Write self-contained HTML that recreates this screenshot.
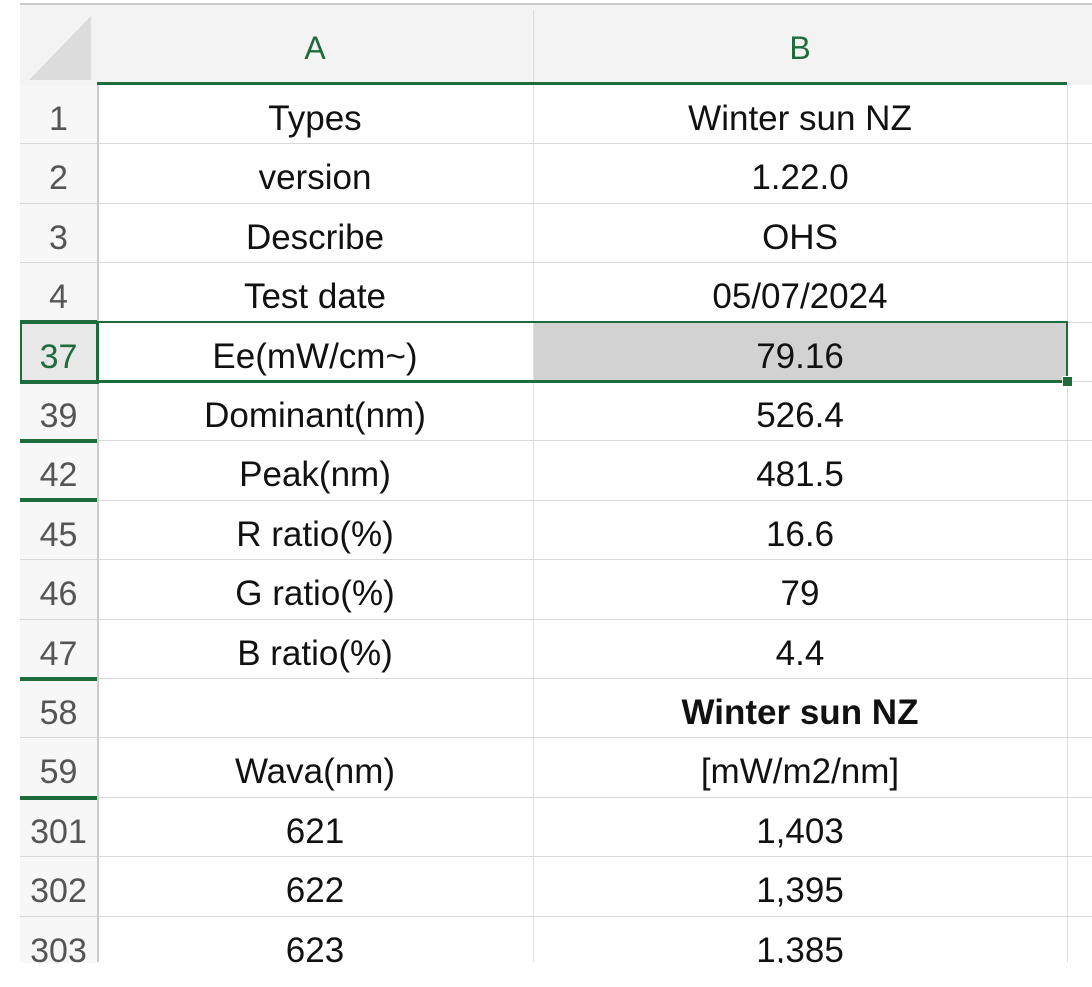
<!DOCTYPE html>
<html><head><style>
body{margin:0;width:1092px;height:987px;background:#fff;position:relative;overflow:hidden;font-family:"Liberation Sans",sans-serif}
.a{position:absolute}
.hd{background:#f3f3f3}
.row{position:absolute;left:20px;width:1072px;height:59.4px;border-bottom:1.5px solid #d9d9d9;box-sizing:border-box}
.n{position:absolute;left:0;width:77px;height:100%;background:#f7f7f7;color:#555;font-size:34px;text-align:center;line-height:68px}
.c{position:absolute;height:100%;text-align:center;font-size:35px;line-height:68px;color:#111}
.ca{left:77px;width:436px}
.cb{left:513px;width:534px}
.g{position:absolute;left:20px;width:77px;height:4px;background:#1e6b3c}
</style></head><body>
<div class="a" style="left:20px;top:3px;width:1072px;height:2px;background:#ccc"></div>
<div class="a hd" style="left:20px;top:5px;width:1072px;height:80px"></div>
<svg class="a" style="left:27px;top:14px" width="66" height="66"><polygon points="64,2 64,66 2,66" fill="#dcdcdc"/></svg>
<div class="a" style="left:97px;top:5px;width:436px;height:80px;color:#1e6b3c;font-size:32px;text-align:center;line-height:86px">A</div>
<div class="a" style="left:533px;top:5px;width:534px;height:80px;color:#1e6b3c;font-size:32px;text-align:center;line-height:86px">B</div>
<div class="a" style="left:533px;top:10px;width:1px;height:72px;background:#ddd"></div>
<div class="a" style="left:97px;top:82px;width:970px;height:3px;background:#1e6b3c"></div>
<div class="row" style="top:85px"><div class="n">1</div><div class="c ca">Types</div><div class="c cb">Winter sun NZ</div></div>
<div class="row" style="top:144.4px"><div class="n">2</div><div class="c ca">version</div><div class="c cb">1.22.0</div></div>
<div class="row" style="top:203.8px"><div class="n">3</div><div class="c ca">Describe</div><div class="c cb">OHS</div></div>
<div class="row" style="top:263.2px"><div class="n">4</div><div class="c ca">Test date</div><div class="c cb">05/07/2024</div></div>
<div class="row" style="top:322.6px"><div class="n" style="background:#e8e8e8;color:#1e6b3c">37</div><div class="c ca">Ee(mW/cm~)</div><div class="c cb" style="background:#d2d2d2">79.16</div></div>
<div class="row" style="top:382px"><div class="n">39</div><div class="c ca">Dominant(nm)</div><div class="c cb">526.4</div></div>
<div class="row" style="top:441.4px"><div class="n">42</div><div class="c ca">Peak(nm)</div><div class="c cb">481.5</div></div>
<div class="row" style="top:500.8px"><div class="n">45</div><div class="c ca">R ratio(%)</div><div class="c cb">16.6</div></div>
<div class="row" style="top:560.2px"><div class="n">46</div><div class="c ca">G ratio(%)</div><div class="c cb">79</div></div>
<div class="row" style="top:619.6px"><div class="n">47</div><div class="c ca">B ratio(%)</div><div class="c cb">4.4</div></div>
<div class="row" style="top:679px"><div class="n">58</div><div class="c ca"></div><div class="c cb" style="font-weight:bold">Winter sun NZ</div></div>
<div class="row" style="top:738.4px"><div class="n">59</div><div class="c ca">Wava(nm)</div><div class="c cb">[mW/m2/nm]</div></div>
<div class="row" style="top:797.8px"><div class="n">301</div><div class="c ca">621</div><div class="c cb">1,403</div></div>
<div class="row" style="top:857.2px"><div class="n">302</div><div class="c ca">622</div><div class="c cb">1,395</div></div>
<div class="row" style="top:916.6px;height:46px;overflow:hidden;border-bottom:none"><div class="n">303</div><div class="c ca">623</div><div class="c cb">1,385</div></div>
<div class="a" style="left:97px;top:85px;width:2px;height:877px;background:#ccc"></div>
<div class="a" style="left:533px;top:85px;width:1px;height:877px;background:#ddd"></div>
<div class="a" style="left:1067px;top:85px;width:1px;height:877px;background:#ddd"></div>
<div class="g" style="top:320px"></div>
<div class="g" style="top:380px"></div>
<div class="g" style="top:439px"></div>
<div class="g" style="top:498px"></div>
<div class="g" style="top:677px"></div>
<div class="g" style="top:796px"></div>
<div class="a" style="left:20px;top:321px;width:75px;height:59px;border:2px solid #1e6b3c"></div>
<div class="a" style="left:96px;top:321px;width:968px;height:57px;border:2px solid #1e6b3c;border-bottom-width:3px"></div>
<div class="a" style="left:1062px;top:376px;width:9px;height:9px;background:#1e6b3c;border:1px solid #fff"></div>
</body></html>
